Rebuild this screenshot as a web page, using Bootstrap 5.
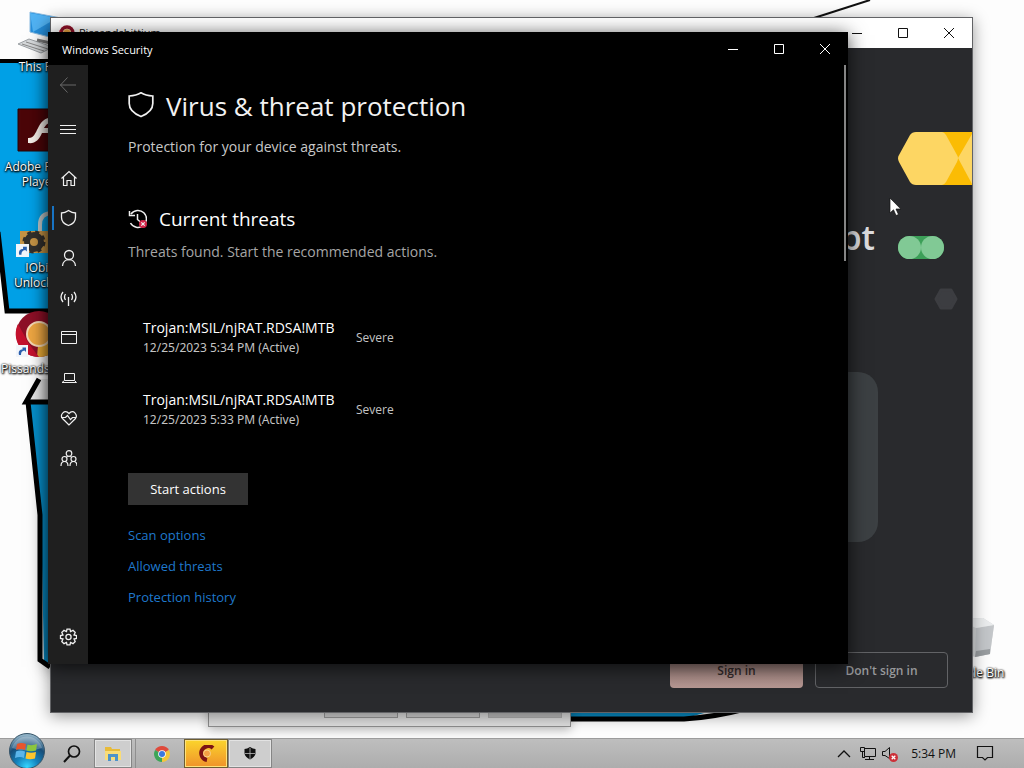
<!DOCTYPE html>
<html lang="en">
<head>
<meta charset="utf-8">
<meta name="viewport" content="width=device-width, initial-scale=1">
<title>Windows Security</title>
<link href="https://cdn.jsdelivr.net/npm/bootstrap@5.3.0/dist/css/bootstrap.min.css" rel="stylesheet">
<style>
  body { font-family: "Open Sans", "Noto Sans", sans-serif; font-size: 14px; line-height: 20px; background: #fdfdfd; }
  svg { display: block; flex: none; }
  button { font: inherit; color: inherit; background: none; border: 0; padding: 0; }
  .desk { min-height: 560px; }
  .wallpaper { position: absolute; inset: 0; width: 100%; height: 100%; }

  /* desktop shortcuts */
  .shortcut { position: absolute; width: 76px; font-size: 12px; line-height: 15px; color: #fff; text-align: center; text-decoration: none;
    text-shadow: 0 0 2px #000, 1px 1px 2px #000, 0 1px 2px #000; }
  .shortcut svg { margin: 0 auto; }
  .sc-pc { left: 1px; top: 10px; }
  .sc-flash { left: 1px; top: 107px; }
  .sc-iobit { left: 1px; top: 209px; }
  .sc-browser { left: 1px; top: 310px; }
  .sc-bin { right: 13px; bottom: 58px; }

  /* windows */
  .win { position: absolute; display: flex; flex-direction: column; }
  .caption { font-size: 11px; line-height: 16px; }
  .cap-btn { width: 46px; display: grid; place-items: center; align-self: stretch; }
  .win-dialog { left: 208px; width: 363px; bottom: 11px; height: 120px; background: #dedede; border: 1px solid #8c8c8c; box-shadow: 0 3px 10px #0004; }
  .dlg-btn { width: 74px; height: 24px; background: #cfcfcf; border: 1px solid #999; font-size: 12px; }
  .dlg-btn:disabled { background: #bdbdbd; border-color: #b0b0b0; color: #888; }
  .win-browser { left: 50px; right: 51px; top: 17px; bottom: 25px; background: #292a2d; border: 1px solid #626366; box-shadow: 0 3px 15px #0006; }
  .win-browser .bar { height: 30px; background: #fff; color: #111; }
  .art { position: absolute; right: 0; top: 30px; }
  .welcome { position: absolute; right: 97px; top: 199px; font-size: 34px; line-height: 40px; font-weight: 600; color: #dcdcdf; }
  .choice { width: 133px; height: 36px; border-radius: 4px; font-size: 12px; font-weight: 600; padding-top: 2px; }
  .choice-in { background: linear-gradient(#8d736f, #b69792); color: #332a2a; }
  .choice-out { border: 1px solid #626366; color: #97989b; }

  .win-security { left: 48px; right: 176px; top: 32px; bottom: 74px; background: #000; color: #fff; box-shadow: 0 3px 18px #000b; }
  .win-security .bar { height: 33px; }
  .win-security .caption { padding: 2px 0 0 14px; }
  .rail { width: 40px; background: #1f1f1f; padding: 0 0 7px; }
  .rail button { height: 40px; display: grid; place-items: center; position: relative; }
  .rail button.current::before { content: ""; position: absolute; left: 4px; top: 8px; width: 2px; height: 24px; background: #1874c4; }
  .rail svg, .page svg { fill: none; stroke: #f0f0f0; }
  .rail .nav-back svg { stroke: #696969; }
  .nav-menu { margin-bottom: 9px; }
  .page { padding: 23px 40px 0; overflow: hidden; }
  .page h1 { font-size: 26px; line-height: 36px; font-weight: 400; margin: 0 0 13px; color: #f2f2f2; }
  .page h2 { font-size: 19px; line-height: 28px; font-weight: 400; margin: 0 0 9px; }
  .intro { color: #c8c8c8; margin: 0 0 48px; }
  .state { color: #a6a6a6; margin: 0 0 56px; }
  .threats { margin: 0 0 11px 15px; }
  .threats td { padding: 0 0 32px; vertical-align: middle; font-size: 12px; color: #c4c4c4; }
  .threats td:first-child { width: 213px; font-family: "Noto Sans", sans-serif; }
  .threats strong { display: block; font-family: "Open Sans", sans-serif; font-size: 14px; font-weight: 400; color: #fff; }
  .start-btn { width: 120px; height: 32px; background: #333; font-size: 13px; }
  .links { gap: 11px; margin-top: 20px; }
  .links a { color: #1f78cc; text-decoration: none; font-size: 13px; }
  .thumb { position: absolute; right: 2px; top: 33px; width: 2px; height: 196px; background: #858585; }
  .pointer { position: absolute; left: 889px; top: 197px; }

  /* taskbar */
  .taskbar { height: 30px; background: linear-gradient(#bebebe, #adadad); border-top: 1px solid #9c9c9c; position: relative; color: #111; font-size: 12px; }
  .orb { width: 54px; height: 29px; }
  .orb svg { margin: -6px 0 0 9px; }
  .task { width: 44px; height: 29px; display: grid; place-items: center; }
  .task-folder { width: 38px; }
  .task-stack { width: 4px; border-right: 1px solid #8f8f8f; }
  .task-open { border: 2px solid #e3e3e3; background: #cecece; outline: 1px solid #858585; outline-offset: -1px; }
  .task-alert { border: 1px solid #6d5d31; background: linear-gradient(#fbd52c, #f0922b); box-shadow: inset 0 0 0 1px #ffe27a; }
  .tray { padding-right: 30px; }
</style>
</head>
<body>
<svg width="0" height="0" class="position-absolute" aria-hidden="true">
  <symbol id="browser" viewBox="0 0 48 48">
    <circle cx="24" cy="24" r="23" fill="#8d1027"/>
    <path d="M24 24 47 24A23 23 0 0 1 22 47Z" fill="#e9aa35"/>
    <path d="M3 14 14 34 24 47A23 23 0 0 1 3 14Z" fill="#c3112d"/>
    <circle cx="24" cy="24" r="12" fill="#eda642" stroke="#f5d9b5" stroke-width="2"/>
  </symbol>
  <symbol id="shortcut-arrow" viewBox="0 0 12 12">
    <path d="M0 0H12V12H0Z" fill="#f2f5fa"/><path d="M3 10C2 6 4 4.500 6.500 4.500V2.500H10V7L8.500 5.500C6 6 5 7 5 10Z" fill="#2a5fae"/>
  </symbol>
  <symbol id="cap-min" viewBox="0 0 12 12"><path d="M1 6.500H11" stroke="currentColor"/></symbol>
  <symbol id="cap-max" viewBox="0 0 12 12"><path d="M1.500 1.500H10.500V10.500H1.500Z" fill="none" stroke="currentColor"/></symbol>
  <symbol id="cap-close" viewBox="0 0 12 12"><path d="M1 1 11 11M11 1 1 11" stroke="currentColor"/></symbol>
</svg>

<div class="d-flex flex-column vh-100">
  <main class="desk position-relative flex-grow-1">
    <svg class="wallpaper" viewBox="0 0 1024 738" preserveAspectRatio="xMinYMin slice" aria-hidden="true">
      <path d="M0 62H60V311H7L0 245Z" fill="#00a0e6"/>
      <path d="M0 61H60" stroke="#000" stroke-width="4"/>
      <path d="M-2 232 7 311H60" fill="none" stroke="#000" stroke-width="5"/>
      <path d="M39 379 26 402H60V379Z" fill="#e6e6e6"/>
      <path d="M29 403H60V664H44L41 515Z" fill="#078fcb"/>
      <path d="M39 379 26 402H60M28 402 40 515V660L50 667" fill="none" stroke="#000" stroke-width="5"/>
      <path d="M560 700H750L690 717H560Z" fill="#078bc4"/>
      <path d="M560 719H684Q715 717 745 709" fill="none" stroke="#000" stroke-width="5"/>
      <path d="M814 18 870 0" stroke="#111" stroke-width="2"/>
    </svg>

    <a href="#" class="shortcut sc-pc">
      <svg width="48" height="49" viewBox="0 0 48 49"><path d="M15 2 46 8V30L15 22Z" fill="#258edb" stroke="#8bbbe0"/><path d="M15 3 42 8 18 22Z" fill="#51b2f2"/><path d="M3 34 14 29 38 37 26 43Z" fill="#d5d8da" stroke="#9ba0a4"/><path d="M7 34 29 41M11 32 33 39" stroke="#888"/><path d="M22 30 40 34" stroke="#777" stroke-width="3"/></svg>This PC
    </a>
    <a href="#" class="shortcut sc-flash">
      <svg width="44" height="52" viewBox="0 0 44 52"><path d="M1 2H43V44H1Z" fill="#4b0508" stroke="#260405"/><path d="M11 31C22 32 18 11 36 10V15C30 16 29 18 27 21H33V26H25C22 33 18 37 11 36Z" fill="#f5eee8"/></svg>Adobe Flash<br>Player
    </a>
    <a href="#" class="shortcut sc-iobit">
      <svg width="46" height="51" viewBox="0 0 46 51"><path d="M24 24V16Q24 4 36 4" fill="none" stroke="#bfc8ca" stroke-width="4"/><path d="M4 22H46V44H4Z" fill="#c69445"/><circle cx="18" cy="33" r="7" fill="none" stroke="#33302c" stroke-width="6"/><circle cx="18" cy="33" r="10" fill="none" stroke="#33302c" stroke-width="3" stroke-dasharray="4 4"/><use href="#shortcut-arrow" x="0" y="35" width="13" height="13"/></svg>IObit<br>Unlocker
    </a>
    <a href="#" class="shortcut sc-browser">
      <svg width="48" height="51" viewBox="0 0 48 51"><use href="#browser" width="48" height="48"/><use href="#shortcut-arrow" x="1" y="35" width="12" height="12"/></svg>Pissandshittium
    </a>
    <a href="#" class="shortcut sc-bin">
      <svg width="48" height="50" viewBox="0 0 48 50"><path d="M6 4 34 3 45 10 41 39 26 42 8 36Z" fill="#d3d5d7"/><path d="M27 13 45 10 41 39 26 42Z" fill="#c3c6c9"/><path d="M6 4 34 3 45 10 27 13Z" fill="#ebedee"/><path d="M27 36 41 34V39L26 42Z" fill="#999da0"/></svg>Recycle Bin
    </a>

    <section class="win win-dialog" aria-label="Dialog">
      <div class="d-flex justify-content-end gap-2 mt-auto pe-1 pb-2 me-n1 dlg-row">
        <button class="dlg-btn" aria-label="Back"></button><button class="dlg-btn" aria-label="Next"></button><button class="dlg-btn me-1" aria-label="Apply" disabled></button>
      </div>
    </section>

    <section class="win win-browser" aria-label="Pissandshittium">
      <header class="bar d-flex align-items-center">
        <svg width="16" height="16" class="ms-2 me-1"><use href="#browser"/></svg>
        <span class="caption">Pissandshittium</span>
        <div class="d-flex ms-auto align-self-stretch">
          <button class="cap-btn" aria-label="Minimize"><svg width="12" height="12"><use href="#cap-min"/></svg></button>
          <button class="cap-btn" aria-label="Maximize"><svg width="12" height="12"><use href="#cap-max"/></svg></button>
          <button class="cap-btn" aria-label="Close"><svg width="12" height="12"><use href="#cap-close"/></svg></button>
        </div>
      </header>
      <svg class="art" width="132" height="500" viewBox="0 0 132 500" aria-hidden="true">
        <path d="M76 84H132V137H76Z" fill="#fbbc04"/>
        <path d="M76 84H102Q104 84 106 87L117 107Q119 110 117 114L106 134Q104 137 102 137H76Q72 137 70 134L59 114Q57 110 59 107L70 87Q72 84 76 84Z" fill="#fdd663"/>
        <path d="M132 86 118 110 132 136Z" fill="#fdd663"/>
        <rect x="58" y="188" width="46" height="23" rx="11.500" fill="#3c9f58"/>
        <circle cx="69.500" cy="199.500" r="11.500" fill="#81c995"/><circle cx="92.500" cy="199.500" r="11.500" fill="#81c995"/>
        <path d="M101 242H111L116 251 111 260H101L96 251Z" fill="#3c3d41" stroke="#3c3d41" stroke-width="3" stroke-linejoin="round"/>
        <rect x="-60" y="324" width="98" height="170" rx="20" fill="#3c4043"/>
      </svg>
      <div class="welcome">pt</div>
      <div class="d-flex justify-content-end mt-auto pe-4 pb-4">
        <button class="choice choice-in me-2">Sign in</button>
        <button class="choice choice-out ms-1">Don't sign in</button>
      </div>
    </section>

    <section class="win win-security" aria-label="Windows Security">
      <header class="bar d-flex align-items-center">
        <span class="caption">Windows Security</span>
        <div class="d-flex ms-auto align-self-stretch">
          <button class="cap-btn" aria-label="Minimize"><svg width="12" height="12"><use href="#cap-min"/></svg></button>
          <button class="cap-btn" aria-label="Maximize"><svg width="12" height="12"><use href="#cap-max"/></svg></button>
          <button class="cap-btn" aria-label="Close"><svg width="12" height="12"><use href="#cap-close"/></svg></button>
        </div>
      </header>
      <div class="d-flex flex-grow-1">
        <nav class="rail d-flex flex-column" aria-label="Sections">
          <button class="nav-back mb-1" aria-label="Back"><svg width="16" height="16" viewBox="0 0 16 16"><path d="M0 8H16M7.500 0.500 0.500 8 7.500 15.500"/></svg></button>
          <button class="nav-menu" aria-label="Menu"><svg width="16" height="16" viewBox="0 0 16 16"><path d="M0 4.500H16M0 8.500H16M0 12.500H16"/></svg></button>
          <button aria-label="Home"><svg width="18" height="18" viewBox="0 0 18 18"><path d="M2.500 9.500 10 2.500 17.500 9.500M4.500 8V16.500H8V11.500H12V16.500H15.500V8" stroke-width="1.200"/></svg></button>
          <button class="current" aria-label="Virus &amp; threat protection"><svg width="18" height="18" viewBox="0 0 18 18"><path d="M9.500 1.500Q6 4 2.500 4V8.500C2.500 12.500 5 15 9.500 16.500 14 15 16.500 12.500 16.500 8.500V4Q13 4 9.500 1.500Z" stroke-width="1.300"/></svg></button>
          <button aria-label="Account protection"><svg width="18" height="18" viewBox="0 0 18 18"><circle cx="10" cy="6" r="4.500" stroke-width="1.300"/><path d="M3.500 17C4 8.500 16 8.500 16.500 17" stroke-width="1.300"/></svg></button>
          <button aria-label="Firewall &amp; network protection"><svg width="18" height="18" viewBox="0 0 18 18"><path d="M9.500 8V17M6.500 11Q4.500 8 6.500 5M12.500 11Q14.500 8 12.500 5M4 13Q0 8 4 3M15 13Q19 8 15 3" stroke-width="1.300"/></svg></button>
          <button aria-label="App &amp; browser control"><svg width="18" height="18" viewBox="0 0 18 18"><path d="M2.500 2.500H17.500V14.500H2.500ZM2.500 5.500H17.500"/></svg></button>
          <button aria-label="Device security"><svg width="18" height="18" viewBox="0 0 18 18"><path d="M5.500 4.500H15.500V11.500H5.500ZM5.500 11.500 3 13.500H17.500L15.500 11.500"/></svg></button>
          <button aria-label="Device performance &amp; health"><svg width="18" height="18" viewBox="0 0 18 18"><path d="M10 16 3.500 9.500C0.500 6 5.500 -0.500 10 4.500 14.500 -0.500 19 6 16.500 9.500ZM2 8.500H6.500L8.500 6.500 11.500 10.500 13.500 8.500H17.500" stroke-width="1.200"/></svg></button>
          <button aria-label="Family options"><svg width="18" height="18" viewBox="0 0 18 18"><circle cx="10" cy="4.500" r="2.800" stroke-width="1.200"/><circle cx="5.500" cy="10" r="2.500" stroke-width="1.200"/><circle cx="14.500" cy="10" r="2.500" stroke-width="1.200"/><path d="M2 17C2 11 9 11 9 17M11 17C11 11 18 11 18 17M8.500 7 7.500 8.500M11.500 7 12.500 8.500" stroke-width="1.200"/></svg></button>
          <button class="mt-auto" aria-label="Settings"><svg width="18" height="18" viewBox="0 0 18 18"><circle cx="9.500" cy="9" r="2.600" stroke-width="1.300"/><path d="M8 1.200H11L11.500 3.500 14 2.300 16.200 4.500 15 7 17.500 7.500V10.500L15 11 16.200 13.500 14 15.700 11.500 14.500 11 16.800H8L7.500 14.500 5 15.700 2.800 13.500 4 11 1.500 10.500V7.500L4 7 2.800 4.500 5 2.300 7.500 3.500Z" stroke-width="1.300"/></svg></button>
        </nav>
        <div class="page flex-grow-1">
          <h1 class="d-flex"><svg width="26" height="28" viewBox="0 0 26 28" class="me-2 mt-1"><path d="M13 0.800C9.500 3 6 3.800 1.200 4V11.500C1.200 18 5.500 21.500 13 24.500 20.500 21.500 24.800 18 24.800 11.500V4C20 3.800 16.500 3 13 0.800Z" stroke-width="1.700"/></svg><span class="ms-1">Virus &amp; threat protection</span></h1>
          <p class="intro">Protection for your device against threats.</p>
          <h2 class="d-flex align-items-center"><svg width="19" height="20" viewBox="0 0 19 20" class="me-2"><path d="M3 5A8.500 8.500 0 1 1 2.500 14M1.500 2V6.500H7M9.500 5V10.500L13 13.500" stroke-width="1.500"/><circle cx="15" cy="15" r="4" fill="#d32649" stroke="none"/><path d="M13.300 13.300 16.700 16.700M16.700 13.300 13.300 16.700" stroke-width="1.200"/></svg><span class="ms-1">Current threats</span></h2>
          <p class="state">Threats found. Start the recommended actions.</p>
          <table class="threats">
            <tr><td><strong>Trojan:MSIL/njRAT.RDSA!MTB</strong>12/25/2023 5:34 PM (Active)</td><td>Severe</td></tr>
            <tr><td><strong>Trojan:MSIL/njRAT.RDSA!MTB</strong>12/25/2023 5:33 PM (Active)</td><td>Severe</td></tr>
          </table>
          <button class="start-btn">Start actions</button>
          <div class="links d-flex flex-column align-items-start">
            <a href="#">Scan options</a><a href="#">Allowed threats</a><a href="#">Protection history</a>
          </div>
        </div>
      </div>
      <div class="thumb"></div>
    </section>

    <svg class="pointer" width="14" height="21" viewBox="0 0 14 21" aria-hidden="true"><path d="M1 1V16L4.500 12.800 7 18.500 9.500 17.500 7 12H11.800Z" fill="#fff" stroke="#111" stroke-width=".7"/></svg>
  </main>

  <footer class="taskbar d-flex align-items-center flex-shrink-0">
    <button class="orb" aria-label="Start">
      <svg width="36" height="36" viewBox="0 0 36 36">
        <defs><radialGradient id="orb-fill" cx=".5" cy=".95" r=".9"><stop offset="0" stop-color="#35d6ff"/><stop offset=".35" stop-color="#1583bd"/><stop offset=".7" stop-color="#174d78"/><stop offset="1" stop-color="#8fb1c5"/></radialGradient></defs>
        <circle cx="18" cy="18" r="17.500" fill="url(#orb-fill)" stroke="#365468"/>
        <path d="M3 15A15.500 15.500 0 0 1 33 15Q18 20 3 15Z" fill="#fff" opacity=".25"/>
        <path d="M8 11Q12 9 17 11L16 17Q11 15 7 17Z" fill="#e8552b"/><path d="M18.500 11.500Q23 13 28 11L27 17.500Q22 19 17.500 17.500Z" fill="#8cc63e"/><path d="M7 18.500Q11 16.500 16 18.500L15 25Q11 23 6 25Z" fill="#5bb5ea"/><path d="M17.500 19Q22 20.500 27 19L26 25.500Q21 27 16.500 25.500Z" fill="#fdc52e"/>
      </svg>
    </button>
    <button class="px-2 me-1" aria-label="Search"><svg width="20" height="20" viewBox="0 0 20 20"><circle cx="12" cy="7.500" r="5.500" fill="none" stroke="#111" stroke-width="1.700"/><path d="M8 11.500 2 18" stroke="#111" stroke-width="2"/></svg></button>
    <div class="d-flex">
      <button class="task task-folder task-open" aria-label="File Explorer"><svg width="18" height="16" viewBox="0 0 18 16"><path d="M1 1H7L8 3H16V14H1Z" fill="#e8bb39"/><path d="M1 5H17V14H1Z" fill="#f9dc78"/><path d="M4 15V8H14V15H11V11H7V15Z" fill="#4e93c9"/></svg></button>
      <span class="task task-stack"></span>
      <button class="task mx-auto ms-1" aria-label="Chrome"><svg width="16" height="16" viewBox="0 0 16 16"><path d="M8 8 1.100 4A8 8 0 0 1 14.900 4Z" fill="#df4a3b"/><path d="M8 8V16A8 8 0 0 1 1.100 4Z" fill="#3da557"/><path d="M8 8 14.900 4A8 8 0 0 1 8 16Z" fill="#f4c63c"/><circle cx="8" cy="8" r="3.800" fill="#fff"/><circle cx="8" cy="8" r="3" fill="#3c78df"/></svg></button>
      <button class="task task-alert" aria-label="Pissandshittium"><svg width="17" height="17" viewBox="0 0 17 17"><path d="M15 3A7 7 0 1 0 9 15" fill="none" stroke="#7c1414" stroke-width="4"/><circle cx="9" cy="8.500" r="3.500" fill="#f4a044" stroke="#f9d38b"/></svg></button>
      <button class="task task-open" aria-label="Windows Security"><svg width="12" height="13" viewBox="0 0 12 13"><path d="M6 0Q3 2 0.500 2V6C0.500 9 3 11 6 12.500 9 11 11.500 9 11.500 6V2Q9 2 6 0Z" fill="#111"/><path d="M6 1V12M1 6.500H11" stroke="#bbb" stroke-width=".8"/></svg></button>
    </div>
    <div class="tray d-flex align-items-center ms-auto">
      <button aria-label="Show hidden icons"><svg width="14" height="14" viewBox="0 0 14 14"><path d="M1 10 7 4 13 10" fill="none" stroke="#111" stroke-width="1.300"/></svg></button>
      <button class="ms-2" aria-label="Network"><svg width="18" height="16" viewBox="0 0 18 16"><path d="M5.500 2.500H16.500V10.500H5.500ZM10.500 10.500V13.500M6 13.500H15M1.500 1.500H5.500V5.500H1.500ZM3.500 5.500V11.500H6" fill="none" stroke="#111"/></svg></button>
      <button class="ms-1" aria-label="Volume muted"><svg width="18" height="18" viewBox="0 0 18 18"><path d="M1.500 6.500H4L8.500 2.500V13.500L4 10.500H1.500Z" fill="none" stroke="#111"/><circle cx="12.500" cy="12.500" r="4.500" fill="#cc3038"/><path d="M10.700 10.700 14.300 14.300M14.300 10.700 10.700 14.300" stroke="#fff" stroke-width="1.300"/></svg></button>
      <time class="ms-2 ps-1 me-3">5:34 PM</time>
      <button class="ms-1" aria-label="Notifications"><svg width="18" height="18" viewBox="0 0 18 18"><path d="M1.500 1.500H16.500V12.500H11.500L9 15 6.500 12.500H1.500Z" fill="none" stroke="#111" stroke-width="1.200"/></svg></button>
    </div>
  </footer>
</div>
<script src="https://cdn.jsdelivr.net/npm/bootstrap@5.3.0/dist/js/bootstrap.bundle.min.js"></script>
</body>
</html>
